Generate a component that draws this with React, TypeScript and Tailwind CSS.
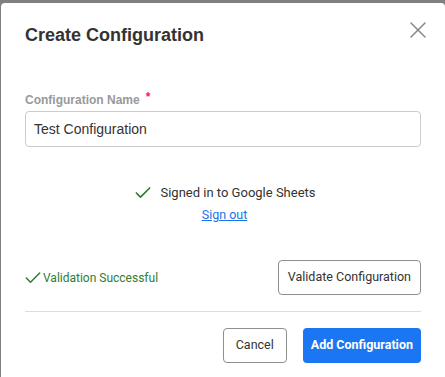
import { X, Check } from "lucide-react";

export default function App() {
  return (
    <div className="w-[445px] h-[377px] overflow-hidden bg-[#808080] pt-[3px] pl-[1px] font-['Roboto',sans-serif]">
      <div className="bg-white rounded-[4px] h-[420px] px-6 text-[#333]">
        {/* Header */}
        <div className="flex items-start justify-between pt-[20px] h-[44px]">
          <h2 className="font-['Liberation_Sans',Arial,sans-serif] font-bold text-[18px] text-[#333] -mt-[1px]">
            Create Configuration
          </h2>
          <button className="text-[#8a8a8a] -mt-[7px] -mr-[11px]">
            <X size={28} strokeWidth={1.3} />
          </button>
        </div>

        {/* Name field */}
        <div className="mt-[45px]">
          <label className="block font-['Liberation_Sans',Arial,sans-serif] font-bold text-[12px] text-[#999] leading-[16px]">
            Configuration Name
            <span className="ml-[6px] text-[#e91e63] relative -top-[3px]">*</span>
          </label>
          <div className="mt-[3px] h-[36px] border border-[#ccc] rounded-[4px] flex items-center px-[8px]">
            <span className="font-['Liberation_Sans',Arial,sans-serif] text-[14px] text-[#333]">
              Test Configuration
            </span>
          </div>
        </div>

        {/* Google sign in */}
        <div className="mt-[36px] flex flex-col items-center">
          <div className="flex items-center gap-[7px] pl-[3px]">
            <Check size={20} strokeWidth={2} className="text-[#2e7d32]" />
            <span className="text-[13px] text-[#333] leading-[16px]">Signed in to Google Sheets</span>
          </div>
          <a className="mt-[4px] text-[12.5px] text-[#1a73e8] underline leading-[16px] pl-[3px]">Sign out</a>
        </div>

        {/* Validation */}
        <div className="mt-[37px] flex items-center justify-between">
          <div className="flex items-center -ml-[2px] text-[#2e7d32] text-[12px]">
            <Check size={20} strokeWidth={1.8} />
            <span>Validation Successful</span>
          </div>
          <button className="h-[35px] px-[9px] border border-[#8f8f8f] rounded-[4px] text-[12.5px] text-[#333]">
            Validate Configuration
          </button>
        </div>

        <div className="mt-[16px] border-t border-[#ddd]" />

        {/* Footer */}
        <div className="mt-[16px] flex justify-end gap-[16px]">
          <button className="h-[35px] w-[64px] border border-[#8f8f8f] rounded-[4px] text-[12.5px] text-[#333]">
            Cancel
          </button>
          <button className="h-[35px] px-[8px] bg-[#1a76f2] rounded-[4px] text-[12.5px] font-bold text-white">
            Add Configuration
          </button>
        </div>
      </div>
    </div>
  );
}
